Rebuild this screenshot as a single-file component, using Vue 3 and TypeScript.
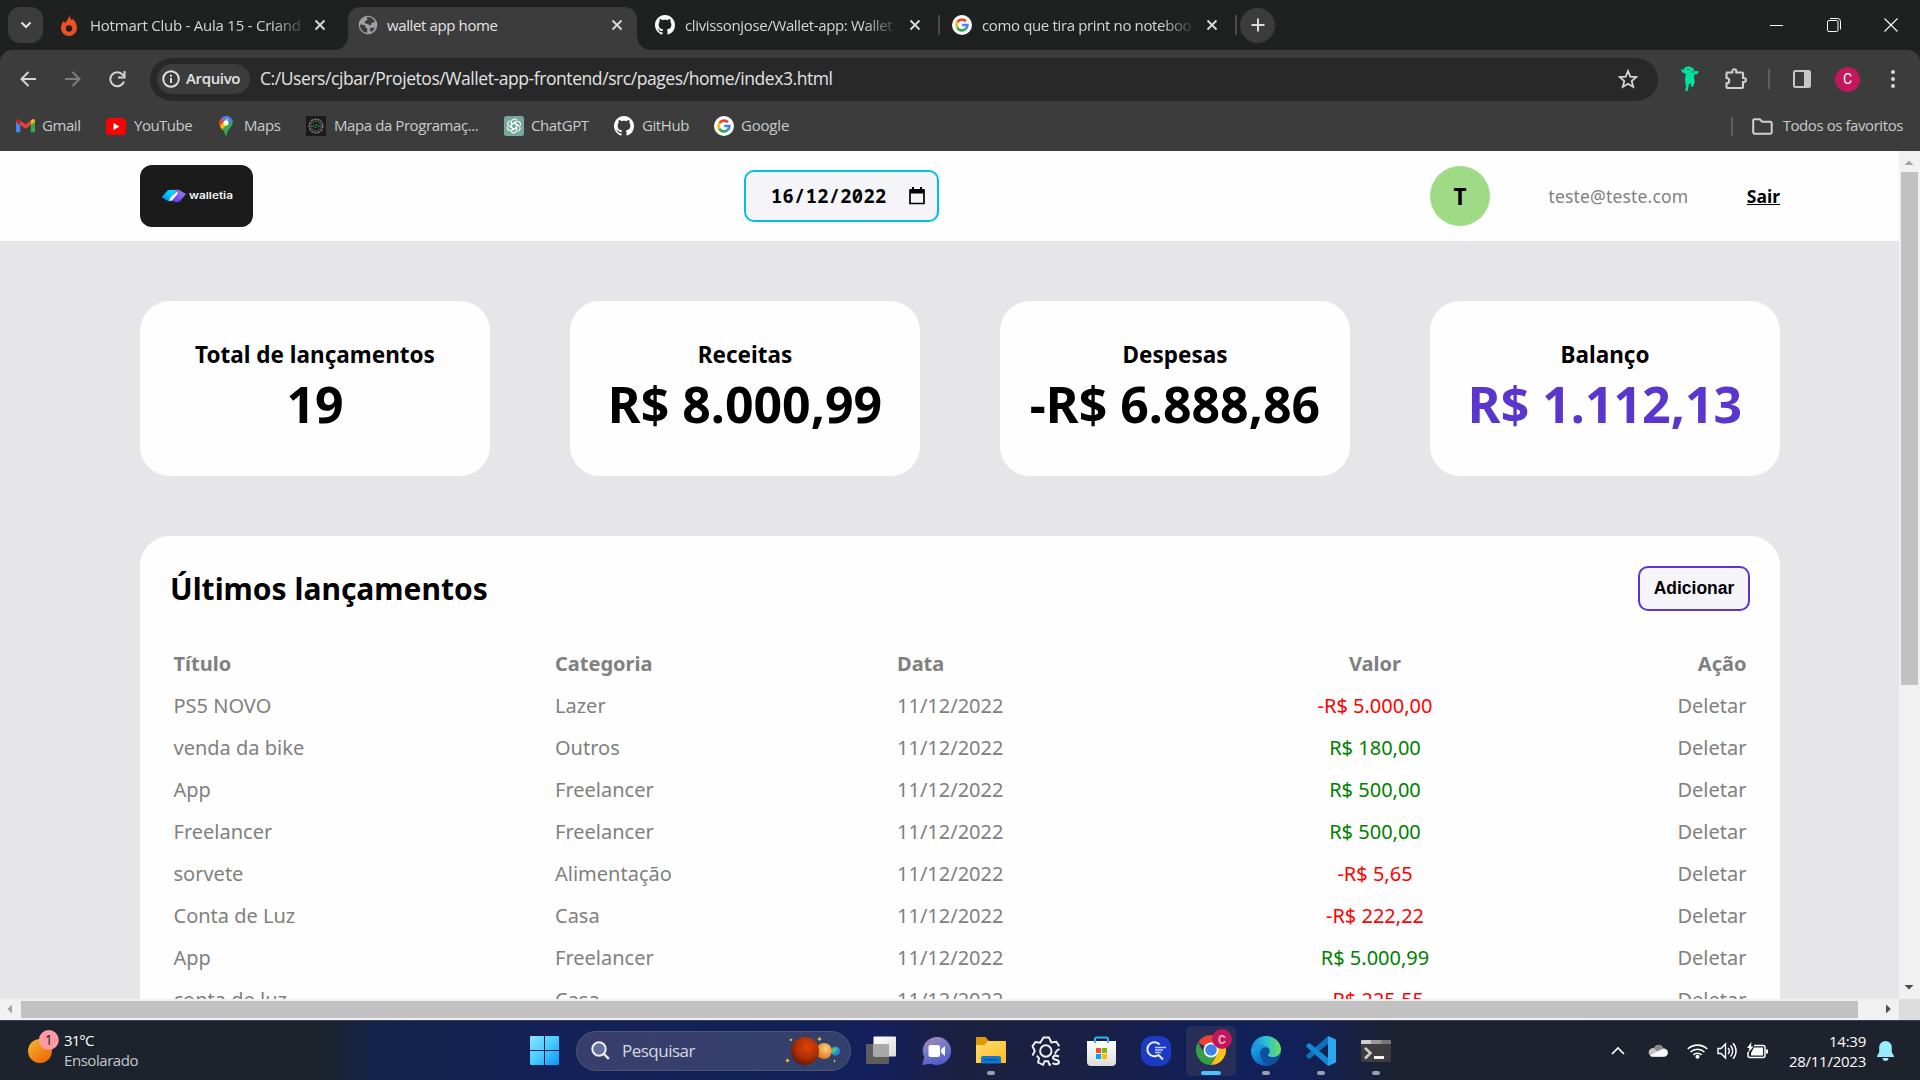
<script setup lang="ts">
interface Entry {
  title: string
  category: string
  date: string
  value: string
  income: boolean
}

const summary = [
  { label: 'Total de lançamentos', value: '19', accent: false },
  { label: 'Receitas', value: 'R$ 8.000,99', accent: false },
  { label: 'Despesas', value: '-R$ 6.888,86', accent: false },
  { label: 'Balanço', value: 'R$ 1.112,13', accent: true },
]

const entries: Entry[] = [
  { title: 'PS5 NOVO', category: 'Lazer', date: '11/12/2022', value: '-R$ 5.000,00', income: false },
  { title: 'venda da bike', category: 'Outros', date: '11/12/2022', value: 'R$ 180,00', income: true },
  { title: 'App', category: 'Freelancer', date: '11/12/2022', value: 'R$ 500,00', income: true },
  { title: 'Freelancer', category: 'Freelancer', date: '11/12/2022', value: 'R$ 500,00', income: true },
  { title: 'sorvete', category: 'Alimentação', date: '11/12/2022', value: '-R$ 5,65', income: false },
  { title: 'Conta de Luz', category: 'Casa', date: '11/12/2022', value: '-R$ 222,22', income: false },
  { title: 'App', category: 'Freelancer', date: '11/12/2022', value: 'R$ 5.000,99', income: true },
  { title: 'conta de luz', category: 'Casa', date: '11/12/2022', value: '-R$ 225,55', income: false },
]
</script>

<template>
  <div class="screen">
    <svg width="0" height="0" class="defs">
      <defs>
        <symbol id="google" viewBox="0 0 24 24">
          <circle cx="12" cy="12" r="12" fill="#fff" />
          <g fill="none" stroke-width="3.2">
            <path d="M6.6 8.4A6.5 6.5 0 0 1 16.7 7.5" stroke="#ea4335" />
            <path d="M6.3 15.1A6.5 6.5 0 0 1 6.6 8.4" stroke="#fbbc05" />
            <path d="M16.3 16.9A6.5 6.5 0 0 1 6.3 15.1" stroke="#34a853" />
            <path d="M12.2 12h6.3A6.5 6.5 0 0 1 16.2 16.9" stroke="#4285f4" />
          </g>
        </symbol>
        <symbol id="github" viewBox="0 0 16 16">
          <path fill="#fff" d="M8 0C3.58 0 0 3.58 0 8c0 3.54 2.29 6.53 5.47 7.59.4.07.55-.17.55-.38 0-.19-.01-.82-.01-1.49-2.01.37-2.53-.49-2.69-.94-.09-.23-.48-.94-.82-1.13-.28-.15-.68-.52-.01-.53.63-.01 1.08.58 1.23.82.72 1.21 1.87.87 2.33.66.07-.52.28-.87.51-1.07-1.78-.2-3.64-.89-3.64-3.95 0-.87.31-1.59.82-2.15-.08-.2-.36-1.02.08-2.12 0 0 .67-.21 2.2.82.64-.18 1.32-.27 2-.27s1.36.09 2 .27c1.53-1.04 2.2-.82 2.2-.82.44 1.1.16 1.92.08 2.12.51.56.82 1.27.82 2.15 0 3.07-1.87 3.75-3.65 3.95.29.25.54.73.54 1.48 0 1.07-.01 1.93-.01 2.2 0 .21.15.46.55.38A8.01 8.01 0 0 0 16 8c0-4.42-3.58-8-8-8z" />
        </symbol>
        <symbol id="close" viewBox="0 0 12 12">
          <path d="M1.500 1.500l9 9M10.500 1.500l-9 9" stroke="#dcdcdc" stroke-width="1.800" fill="none" />
        </symbol>
      </defs>
    </svg>

    <!-- Tab strip -->
    <div class="tabs">
      <div class="tab-search">
        <svg width="12" height="8" viewBox="0 0 12 8"><path d="M1.500 1.500L6 6l4.500-4.500" fill="none" stroke="#e3e3e3" stroke-width="2" /></svg>
      </div>
      <div class="tab first">
        <svg width="16" height="21" viewBox="0 0 16 21">
          <path fill="#f04e23" d="M8.300 0c.6 3.200 1.600 4.200 3 5.600.3-.8.4-1.500.4-2.300C14.500 6.500 16 9.800 16 13a8 8 0 0 1-16 0c0-3 1.300-5.300 3-7.300.1 1 .3 1.700.8 2.300C6 6 7.800 3.600 8.300 0z" />
          <circle cx="8" cy="13.500" r="3.200" fill="#1f2120" />
        </svg>
        <span class="tab-title fade t1">Hotmart Club - Aula 15 - Criand</span>
        <svg width="12" height="12"><use href="#close" /></svg>
      </div>
      <div class="tab active">
        <svg width="20" height="20" viewBox="0 0 20 20">
          <circle cx="10" cy="10" r="9.300" fill="#9aa0a6" />
          <path fill="#3c3c3c" d="M2 9.500c3 .2 5 .4 5.400 2.200.3 1.500 1.800 1 1.800 2.600v3.500C4.800 17.500 2 14 2 9.500zM9 2.100c3.600-.6 6.500 1.500 7.900 4.400-1 1.400-2.400.6-3.300 1.400-.8.8.6 1.700-.9 2.200-1.600.5-2.200-1-3.700-1.300-1.300-.3-2.200-.2-2.200-1.600 0-1.700 2.400-1 2.600-2.600C9.500 3.700 8.300 3 9 2.100zM12.500 13c1.500-.5 3-.2 4.300 0-.8 1.800-2.200 3.200-3.800 3.900-.9-1.100-1.400-3.300-.5-3.900z" />
        </svg>
        <span class="tab-title t2">wallet app home</span>
        <svg width="12" height="12"><use href="#close" /></svg>
      </div>
      <div class="tab third">
        <svg width="20" height="20"><use href="#github" /></svg>
        <span class="tab-title fade t3">clivissonjose/Wallet-app: Wallet</span>
        <svg width="12" height="12"><use href="#close" /></svg>
      </div>
      <i class="tab-sep"></i>
      <div class="tab fourth">
        <svg width="20" height="20"><use href="#google" /></svg>
        <span class="tab-title fade t4">como que tira print no noteboo</span>
        <svg width="12" height="12"><use href="#close" /></svg>
      </div>
      <i class="tab-sep"></i>
      <div class="new-tab">
        <svg width="14" height="14" viewBox="0 0 14 14"><path d="M7 .5v13M.5 7h13" stroke="#dcdcdc" stroke-width="2" /></svg>
      </div>
      <div class="win">
        <svg width="14" height="14" viewBox="0 0 14 14"><path d="M0 7.500h13" stroke="#fff" /></svg>
        <svg width="14" height="14" viewBox="0 0 14 14"><rect x=".5" y="2.500" width="10.500" height="11" rx="1.500" fill="none" stroke="#fff" /><path d="M3 .5h7.500a3 3 0 0 1 3 3v8" fill="none" stroke="#fff" /></svg>
        <svg width="14" height="14" viewBox="0 0 14 14"><path d="M.5.5l13 13M13.500.5l-13 13" stroke="#fff" stroke-width="1.100" /></svg>
      </div>
    </div>

    <!-- Address row -->
    <div class="toolbar">
      <svg class="nav" width="16" height="16" viewBox="0 0 16 16"><path d="M16 8H1.500M8.500 1L1.500 8l7 7" fill="none" stroke="#d5d5d5" stroke-width="2" /></svg>
      <svg class="fwd" width="16" height="16" viewBox="0 0 16 16"><path d="M0 8h14.500M7.500 1l7 7-7 7" fill="none" stroke="#7d7d7d" stroke-width="2" /></svg>
      <svg class="rel" width="17" height="17" viewBox="0 0 17 17"><path d="M15 10.500A7 7 0 1 1 13.600 3.600L15 5.200" fill="none" stroke="#d5d5d5" stroke-width="2" /><path d="M15.500 0v6.500H9" fill="none" stroke="#d5d5d5" stroke-width="2" /></svg>
      <div class="omnibox">
        <div class="chip">
          <svg width="18" height="18" viewBox="0 0 18 18"><circle cx="9" cy="9" r="7.800" fill="none" stroke="#e3e3e3" stroke-width="1.900" /><path d="M9 8v5M9 4.800v1.900" stroke="#e3e3e3" stroke-width="1.900" /></svg>
          <span>Arquivo</span>
        </div>
        <span class="url">C:/Users/cjbar/Projetos/Wallet-app-frontend/src/pages/home/index3.html</span>
        <svg class="star" width="20" height="20" viewBox="0 0 20 20"><path d="M10 2l2.300 5.600 6 .5-4.600 3.900 1.500 5.900L10 14.700l-5.200 3.200 1.500-5.900L1.700 8.100l6-.5z" fill="none" stroke="#d5d5d5" stroke-width="1.800" /></svg>
      </div>
      <svg class="ext" width="18" height="26" viewBox="0 0 18 26"><path fill="#00e0a0" d="M0 2.800L2.800 4 4 1l4-.8L12 2l1.500 3.300L17.500 5l-.5 3-3.700.5L13 12l.8 4-1.600 4.500-2 .5-.3-3.500-2 .5L7 24.500l-2.500 1 .3-6L4 14l.8-6L.8 6z" /><path d="M6 3.500h2.500M10.500 5.500l2 .8" stroke="#3c3c3c" stroke-width="1.200" /></svg>
      <svg class="puzzle" width="22" height="22" viewBox="0 0 22 22"><path d="M2 4.500h5.300V3.300a2 2 0 0 1 4 0v1.200H17a1 1 0 0 1 1 1V10h.9a2 2 0 0 1 0 4H18v5a1 1 0 0 1-1 1H2.500a1 1 0 0 1-1-1v-3.600c3.600 0 3.600-5.400 0-5.400V5.500z" fill="none" stroke="#d0d0d0" stroke-width="2.100" /></svg>
      <i class="tool-sep"></i>
      <svg class="panel" width="18" height="18" viewBox="0 0 18 18"><rect x="1" y="1" width="16" height="16" rx="1.500" fill="none" stroke="#c7c7c7" stroke-width="2" /><path d="M11 1h6v16h-6z" fill="#c7c7c7" /></svg>
      <div class="profile">C</div>
      <svg class="dots" width="4" height="18" viewBox="0 0 4 18" fill="#d5d5d5"><circle cx="2" cy="2" r="2" /><circle cx="2" cy="9" r="2" /><circle cx="2" cy="16" r="2" /></svg>
    </div>

    <!-- Bookmarks -->
    <div class="bookmarks">
      <div class="bm b1">
        <svg width="19" height="14" viewBox="0 0 19 14"><path d="M0 2v11.200h4.300V4z" fill="#4285f4" /><path d="M19 2v11.200h-4.300V4z" fill="#34a853" /><path d="M14.700 5.800V1.600l1.800-1.200C17.700-.4 19 .6 19 2v1z" fill="#fbbc04" /><path d="M4.300 6V1.500l5.200 3.900 5.200-3.900V6L9.500 9.800z" fill="#ea4335" /><path d="M0 3V2C0 .6 1.300-.4 2.500.4l1.800 1.200V6z" fill="#c5221f" /></svg>
        <span>Gmail</span>
      </div>
      <div class="bm b2">
        <svg width="20" height="17" viewBox="0 0 20 17"><rect width="20" height="17" rx="4" fill="#f00" /><path d="M7.500 5v7l6-3.500z" fill="#fff" /></svg>
        <span>YouTube</span>
      </div>
      <div class="bm b3">
        <svg width="14" height="20" viewBox="0 0 14 20"><path d="M7 0a7 7 0 0 1 6.600 4.800L7 11 2 2.200A7 7 0 0 1 7 0z" fill="#4285f4" /><path d="M2 2.200L5.200 5 .8 10A7 7 0 0 1 2 2.200z" fill="#ea4335" /><path d="M.8 10l8-8.600L9 8.500l-6 5.300z" fill="#fbbc04" /><path d="M13.600 4.800C14.800 10 9 12 7.800 18.500 7.500 20.300 6.400 20.300 6.100 18.500 5.700 16 4.500 14.700 3 13.200z" fill="#34a853" /><path d="M3.300 2.500A7 7 0 0 1 9 .3L4.500 5.500z" fill="#4285f4" /><circle cx="7" cy="7" r="2.500" fill="#fff" /></svg>
        <span>Maps</span>
      </div>
      <div class="bm b4">
        <svg width="20" height="20" viewBox="0 0 20 20"><rect width="20" height="20" fill="#1c1a1a" /><circle cx="10" cy="10" r="6.800" fill="none" stroke="#8d8d8d" stroke-width="1.200" stroke-dasharray="2.500 .8" /><circle cx="10" cy="10" r="5" fill="none" stroke="#6d6d6d" stroke-width=".8" /><path d="M8 8.500L6.500 10 8 11.500M12 8.500l1.500 1.500-1.500 1.500M10.500 8l-1 4" fill="none" stroke="#1f9d55" /></svg>
        <span>Mapa da Programaç...</span>
      </div>
      <div class="bm b5">
        <svg width="20" height="20" viewBox="0 0 20 20"><rect width="20" height="20" rx="2.500" fill="#75a99c" /><g fill="none" stroke="#fff" stroke-width="1.100"><path v-for="a in [0, 60, 120, 180, 240, 300]" :key="a" :transform="`rotate(${a} 10 10)`" d="M7.400 11.500V5.800a3 3 0 0 1 5.400-1.500M7.400 8.500l4.700-2.700" /></g></svg>
        <span>ChatGPT</span>
      </div>
      <div class="bm b6">
        <svg width="20" height="20"><use href="#github" /></svg>
        <span>GitHub</span>
      </div>
      <div class="bm b7">
        <svg width="20" height="20"><use href="#google" /></svg>
        <span>Google</span>
      </div>
      <div class="bm all">
        <i></i>
        <svg width="21" height="17" viewBox="0 0 21 17"><path d="M2.500 1.200h5.300l2.400 2.600h8a1.500 1.500 0 0 1 1.500 1.500v9a1.500 1.500 0 0 1-1.500 1.500H2.700a1.500 1.500 0 0 1-1.500-1.500V2.500a1.300 1.300 0 0 1 1.300-1.300z" fill="none" stroke="#d0d0d0" stroke-width="2" /></svg>
        <span>Todos os favoritos</span>
      </div>
    </div>

    <!-- Web page -->
    <div class="viewport">
      <div class="page">
        <header class="site-header">
          <div class="logo">
            <svg width="113" height="62" viewBox="0 0 113 62">
              <defs>
                <linearGradient id="lc" x1="0" y1="1" x2="1" y2="0"><stop offset="0" stop-color="#0077ff" /><stop offset=".5" stop-color="#00c2ff" /><stop offset="1" stop-color="#14e0f5" /></linearGradient>
                <linearGradient id="lp" x1="0" y1="1" x2="1" y2="0"><stop offset="0" stop-color="#5327e8" /><stop offset="1" stop-color="#a888f5" /></linearGradient>
              </defs>
              <path d="M28 25l-6.300 7.200 7.300 4.200 2.600-.8L37.500 26.500l-2.200-1.700-4.300.1z" fill="url(#lc)" />
              <path d="M36.500 24.800l1.800-.3 7.700 4.500-5.800 7-3.700 1.500-6.500-2.500z" fill="url(#lp)" />
              <path d="M37 26.500l-7 6.500-.5 2.800 2.500-.4 5.700-6.600z" fill="#fff" />
              <text x="49" y="34" textLength="44" lengthAdjust="spacingAndGlyphs">walletia</text>
            </svg>
          </div>
          <div class="date-input">
            <span>16/12/2022</span>
            <svg width="16" height="18" viewBox="0 0 16 18"><path d="M1 3h14v13.500H1z" fill="none" stroke="#000" stroke-width="1.700" /><path d="M1 2h14v4.500H1zM3 0h2v3H3zM11 0h2v3h-2z" /></svg>
          </div>
          <div class="user">
            <div class="avatar">T</div>
            <span class="email">teste@teste.com</span>
            <a>Sair</a>
          </div>
        </header>

        <main>
          <section class="summary">
            <article v-for="c in summary" :key="c.label" class="card">
              <h3>{{ c.label }}</h3>
              <strong :class="{ accent: c.accent }">{{ c.value }}</strong>
            </article>
          </section>

          <section class="list">
            <div class="list-head">
              <h2>Últimos lançamentos</h2>
              <button>Adicionar</button>
            </div>
            <div class="row head">
              <span>Título</span><span>Categoria</span><span>Data</span><span class="val">Valor</span><span class="act">Ação</span>
            </div>
            <div v-for="(e, i) in entries" :key="i" class="row">
              <span>{{ e.title }}</span>
              <span>{{ e.category }}</span>
              <span>{{ e.date }}</span>
              <span class="val" :class="e.income ? 'in' : 'out'">{{ e.value }}</span>
              <span class="act">Deletar</span>
            </div>
          </section>
        </main>
      </div>
      <div class="vbar">
        <svg width="21" height="21" viewBox="0 0 21 21"><path d="M5.500 14h9L10 9.500z" fill="#a3a3a3" /></svg>
        <div class="vthumb"></div>
        <svg width="21" height="21" viewBox="0 0 21 21"><path d="M5.500 7h9L10 11.500z" fill="#4f4f4f" /></svg>
      </div>
    </div>
    <div class="hbar">
      <svg width="21" height="21" viewBox="0 0 21 21"><path d="M12 5.500v9L7.500 10z" fill="#a3a3a3" /></svg>
      <div class="hthumb"></div>
      <svg width="21" height="21" viewBox="0 0 21 21"><path d="M8 5.500v9l4.800-4.500z" fill="#4f4f4f" /></svg>
      <div class="corner"></div>
    </div>

    <!-- Taskbar -->
    <div class="taskbar">
      <div class="weather">
        <svg width="36" height="36" viewBox="0 0 36 36">
          <defs><linearGradient id="sun" x1="0" y1="0" x2=".8" y2="1"><stop offset="0" stop-color="#f3bd2e" /><stop offset="1" stop-color="#f0610a" /></linearGradient></defs>
          <circle cx="12" cy="22" r="12" fill="url(#sun)" />
          <circle cx="20.800" cy="11" r="10" fill="#ff99a4" />
          <text x="20.800" y="16" text-anchor="middle">1</text>
        </svg>
        <div class="wtext"><span class="temp">31°C</span><span>Ensolarado</span></div>
      </div>

      <div class="apps">
        <svg width="29" height="29" viewBox="0 0 29 29">
          <defs><linearGradient id="win" gradientUnits="userSpaceOnUse" x1="0" y1="0" x2="29" y2="29"><stop offset="0" stop-color="#8fe3ff" /><stop offset=".5" stop-color="#48cbfc" /><stop offset="1" stop-color="#0a94f5" /></linearGradient></defs>
          <path fill="url(#win)" d="M1 0h13v14H0V1a1 1 0 0 1 1-1zM15 0h13a1 1 0 0 1 1 1v13H15zM0 15h14v14H1a1 1 0 0 1-1-1zM15 15h14v13a1 1 0 0 1-1 1H15z" />
        </svg>
        <div class="search">
          <svg width="19" height="19" viewBox="0 0 19 19"><circle cx="8" cy="8" r="6.700" fill="#65709a" stroke="#eceef5" stroke-width="2" /><path d="M12.800 12.800l5 5" stroke="#eceef5" stroke-width="2.400" /></svg>
          <span>Pesquisar</span>
          <svg class="planets" width="56" height="30" viewBox="0 0 56 30">
            <defs>
              <radialGradient id="mars" cx=".58" cy=".35" r=".75"><stop offset="0" stop-color="#d94508" /><stop offset=".5" stop-color="#b53005" /><stop offset="1" stop-color="#521204" /></radialGradient>
              <radialGradient id="venus" cx=".6" cy=".35" r=".7"><stop offset="0" stop-color="#ffcf7a" /><stop offset="1" stop-color="#d9701c" /></radialGradient>
            </defs>
            <circle cx="50.500" cy="15" r="4.500" fill="#2a8ae0" /><path d="M48 12c3-2 5 0 4 2s-3 1-3 4c-2-1-3-4-1-6z" fill="#42c97c" />
            <circle cx="39" cy="15" r="8" fill="url(#venus)" /><circle cx="20" cy="15" r="14" fill="url(#mars)" />
            <path fill="#f5c235" d="M2.500 22l.8 1.700 1.700.8-1.700.8-.8 1.700-.8-1.700L0 24.500l1.700-.8zM34.500.5l.8 1.700 1.700.8-1.700.8-.8 1.700-.8-1.700L32 3l1.700-.8zM6 2.500l1.500 1.300L6 5.200 4.500 3.800zM49.500 23.500l1 1.500-1 1.500-1-1.500z" />
          </svg>
        </div>
        <div class="slot">
          <svg width="30" height="29" viewBox="0 0 30 29"><defs><linearGradient id="tv" x1="0" y1="0" x2="1" y2="1"><stop offset="0" stop-color="#fff" /><stop offset="1" stop-color="#dcdcdc" /></linearGradient></defs><rect y="8" width="23" height="20" rx="1" fill="#5d5d5d" /><rect x="7.500" y=".5" width="22.500" height="20" rx="1" fill="url(#tv)" /><path d="M7.500 8H23v12.500H7.500z" fill="#a9a9a9" /></svg>
        </div>
        <div class="slot">
          <svg width="29" height="28" viewBox="0 0 29 28"><defs><linearGradient id="ch" x1=".2" y1="0" x2=".6" y2="1"><stop offset="0" stop-color="#a884b8" /><stop offset=".5" stop-color="#7078c8" /><stop offset="1" stop-color="#5258cc" /></linearGradient></defs><path d="M15 0a14 14 0 1 1-5.800 26.700L0 28l2.300-7.500A14 14 0 0 1 15 0z" fill="url(#ch)" /><rect x="6.500" y="8" width="11.500" height="12" rx="2" fill="#fff" /><path d="M19 12.500l4-3.500v10l-4-3.500z" fill="#fff" /></svg>
        </div>
        <div class="slot run">
          <svg width="30" height="27" viewBox="0 0 30 27"><defs><linearGradient id="fo" x1="0" y1="0" x2="1" y2="1"><stop offset="0" stop-color="#ffdc6b" /><stop offset="1" stop-color="#fcbd26" /></linearGradient></defs><path d="M1 0h8.500l3 3.500v5H0V1a1 1 0 0 1 1-1z" fill="#dc9a08" /><path d="M12 4h17a1 1 0 0 1 1 1v21H0V8h8.500z" fill="url(#fo)" /><path d="M5 26.500V21a2 2 0 0 1 2-2h16a2 2 0 0 1 2 2v5.500z" fill="#0f77cf" /><path d="M8.500 22.700h13" stroke="#0a4a8c" stroke-width="1.300" /></svg>
        </div>
        <div class="slot">
          <svg width="30" height="30" viewBox="0 0 30 30"><g fill="none" stroke="#f2f2f2" stroke-width="1.900"><path d="M20 28.500l-1.500.3-1.300-3.600h-3.600l-1.500 3.600-5-2.300.9-4.200-2.200-2.600M1.500 19.500l2.300-4.500-2.300-4.800L4.500 6l4.700.8L12.500 1.500h5.500l2.300 5 5-.8 3 4.500" /><circle cx="14.800" cy="15" r="5.700" /><path d="M28.500 13c-3 1.500-4.500 2.500-4.300 5.500" /></g><path d="M28 20.500c-2.500-1.300-6-1-6 1.200 0 2.500 6 1.500 6 4.300 0 2.500-4 2.700-6.500 1.200" fill="none" stroke="#f2f2f2" stroke-width="2" /></svg>
        </div>
        <div class="slot">
          <svg width="29" height="30" viewBox="0 0 29 30"><defs><linearGradient id="st" x1="0" y1="0" x2="0" y2="1"><stop offset="0" stop-color="#fff" /><stop offset="1" stop-color="#dcdcdc" /></linearGradient></defs><path d="M0 5h29v21a4 4 0 0 1-4 4H4a4 4 0 0 1-4-4z" fill="url(#st)" /><path d="M8 7V3a1.500 1.500 0 0 1 1.500-1.500h10A1.500 1.500 0 0 1 21 3v4" fill="none" stroke="#2fb4f0" stroke-width="2" /><path d="M9 12h5v5H9z" fill="#f25022" /><path d="M15 12h5v5h-5z" fill="#7fba00" /><path d="M9 18h5v5H9z" fill="#00a4ef" /><path d="M15 18h5v5h-5z" fill="#ffb900" /></svg>
        </div>
        <div class="slot">
          <svg width="30" height="30" viewBox="0 0 30 30"><rect width="30" height="30" rx="11" fill="#1b3bc4" /><path d="M18.500 8.500a7 7 0 1 0-1 10.500l4.500 4.500" fill="none" stroke="#eef" stroke-width="2" /><path d="M14 11.500h11M14 14h8M14 16.500h6" stroke="#b9c8ff" stroke-width="1.300" /></svg>
        </div>
        <div class="slot on">
          <svg width="36" height="36" viewBox="0 0 36 36"><path d="M15 21L2 13.500A15 15 0 0 1 28 13.500H15z" fill="#ea4335" /><path d="M15 21l-6.500 3.700L2 13.500A15 15 0 0 0 15 36l6.500-11.300z" fill="#34a044" /><path d="M15 21V13.500h13A15 15 0 0 1 15 36l6.500-11.300z" fill="#fbc116" /><circle cx="15" cy="21" r="7.500" fill="#fff" /><circle cx="15" cy="21" r="5.800" fill="#3b82f0" /><circle cx="26" cy="10" r="10" fill="#c2185b" /><text x="26" y="14.500" text-anchor="middle">C</text></svg>
        </div>
        <div class="slot run">
          <svg width="30" height="30" viewBox="0 0 30 30"><defs><linearGradient id="e1" x1="0" y1=".4" x2="1" y2=".4"><stop offset="0" stop-color="#1a86d8" /><stop offset=".5" stop-color="#2cc0d8" /><stop offset="1" stop-color="#6be05a" /></linearGradient><linearGradient id="e2" x1="0" y1="0" x2=".7" y2="1"><stop offset="0" stop-color="#1db0ee" /><stop offset="1" stop-color="#0b5cc0" /></linearGradient></defs><circle cx="15" cy="15" r="15" fill="#0f4f9e" /><path d="M0 14C1 5 8 0 15 0c9 0 15 6.500 15 13.500 0 5-4 7.500-8 7.500s-5.500-1.500-5-2.500c1.500-1.500 2-3 1.500-5C17 9.500 5 7 0 14z" fill="url(#e1)" /><path d="M0 14c3-6 12-6 16-2.500C9 11 8 17 10 21.500c1.500 4 5 7 8.500 8C8 31.500 0 24 0 14z" fill="url(#e2)" /><path d="M12.500 15c0 7 7 9.500 15.500 7.500-2 3.500-6 6.500-9.500 7-5-1.500-10-8.500-6-14.500z" fill="#11509f" /></svg>
        </div>
        <div class="slot run">
          <svg width="30" height="30" viewBox="0 0 30 30"><path d="M22 0l7 3a1.500 1.500 0 0 1 1 1.500v21a1.500 1.500 0 0 1-1 1.500l-7 3z" fill="#2ba7ef" /><path d="M22 0v8L4 22.500l-1.500.2L.3 20.700v-1.500z" fill="#0f70bd" /><path d="M22 30v-8L4 7.500l-1.500-.2L.3 9.300v1.500z" fill="#1586d6" /></svg>
        </div>
        <div class="slot run">
          <svg width="30" height="22" viewBox="0 0 30 22"><rect width="30" height="22" rx="1.500" fill="#3d3d3d" /><path d="M1 0h9v4H0V1a1 1 0 0 1 1-1z" fill="#ccc" /><path d="M10 0h10v4H10z" fill="#999" /><path d="M20 0h9a1 1 0 0 1 1 1v3H20z" fill="#777" /><path d="M4 8l5.500 5L4 18.500" fill="none" stroke="#ccc" stroke-width="2.600" /><path d="M13 17.500h10" stroke="#fff" stroke-width="2.800" /></svg>
        </div>
      </div>

      <div class="tray">
        <svg width="14" height="9" viewBox="0 0 14 9"><path d="M1 8l6-6 6 6" fill="none" stroke="#fff" stroke-width="1.700" /></svg>
        <svg class="cloud" width="20" height="13" viewBox="0 0 20 13"><path d="M6 4a5 5 0 0 1 9.500.5L10 9 4 5z" fill="#8a8a8a" /><path d="M4 12.500A4.200 4.200 0 1 1 6 4.200L15 12.500z" fill="#c4c4c4" /><path d="M2 11.500L12 6l3.500-1.500A4 4 0 0 1 16 12.800H4.500A4 4 0 0 1 2 11.500z" fill="#f6f6f6" /></svg>
        <svg class="wifi" width="21" height="16" viewBox="0 0 21 16"><g fill="none" stroke="#fff" stroke-width="1.600"><path d="M.8 6a14 14 0 0 1 19.400 0" /><path d="M3.600 9a10 10 0 0 1 13.800 0" /><path d="M6.400 11.800a6 6 0 0 1 8.200 0" /></g><circle cx="10.500" cy="13.800" r="2" fill="#fff" /></svg>
        <svg class="spk" width="20" height="18" viewBox="0 0 20 18"><g fill="none" stroke="#fff" stroke-width="1.400"><path d="M1 6.500h3L8.500 2v14L4 11.500H1z" /><path d="M11 6a4 4 0 0 1 0 6M13.500 3.500a8 8 0 0 1 0 11M16 1.200a11.500 11.500 0 0 1 0 15.600" /></g></svg>
        <svg class="bat" width="21" height="17" viewBox="0 0 21 17"><path d="M7 3.500h9a2 2 0 0 1 2 2v8a2 2 0 0 1-2 2H3a2 2 0 0 1-2-2V10" fill="none" stroke="#fff" stroke-width="1.500" /><path d="M7 5.500h9v8H4V11z" fill="#fff" /><path d="M19 7.500h2v4h-2zM4.500 0L0 6h2.500L1 11l5.500-6.500H4z" fill="#fff" /></svg>
        <div class="clock"><span>14:39</span><span>28/11/2023</span></div>
        <svg class="bell" width="17" height="20" viewBox="0 0 17 20"><path d="M8.500 0a6.300 6.300 0 0 1 6.300 6.300v5L17 15v1H0v-1l2.200-3.700v-5A6.300 6.300 0 0 1 8.500 0zM5.500 17h6a3 3 0 0 1-6 0z" fill="#99ebff" /></svg>
      </div>
    </div>
  </div>
</template>

<style>
html,
body {
  margin: 0;
  overflow: hidden;
}
</style>

<style scoped>
* {
  box-sizing: border-box;
}
.defs {
  position: absolute;
}
.screen {
  width: 1920px;
  height: 1080px;
  display: flex;
  flex-direction: column;
  overflow: hidden;
  font-family: 'Open Sans', 'Noto Sans', sans-serif;
  background: #1f2120;
}
svg {
  display: block;
  flex: none;
}

.tabs {
  height: 50px;
  flex: none;
  display: flex;
  align-items: center;
  background: #1f2120;
  color: #d5d5d5;
  font-size: 15px;
}
.tab-search {
  width: 35px;
  height: 36px;
  margin-left: 8px;
  border-radius: 12px;
  background: #3c3c3c;
  display: grid;
  place-items: center;
}
.tab {
  display: flex;
  align-items: center;
  height: 36px;
}
.tab-title {
  flex: none;
  white-space: nowrap;
  line-height: 24px;
  letter-spacing: -0.38px;
}
.fade {
  -webkit-mask-image: linear-gradient(90deg, #000 86%, rgba(0, 0, 0, 0.15) 100%);
  mask-image: linear-gradient(90deg, #000 86%, rgba(0, 0, 0, 0.15) 100%);
}
.first {
  width: 305px;
  padding-left: 18px;
}
.t1 {
  width: 212px;
  margin-left: 13px;
  margin-right: 12px;
  letter-spacing: -0.23px;
}
.active {
  position: relative;
  align-self: flex-end;
  width: 289px;
  height: 43px;
  padding: 0 0 7px 10px;
  background: #3c3c3c;
  border-radius: 12px 12px 0 0;
  color: #e3e3e3;
}
.active::before,
.active::after {
  content: '';
  position: absolute;
  bottom: 0;
  width: 13px;
  height: 13px;
}
.active::before {
  left: -13px;
  background: radial-gradient(circle at 0 0, transparent 12.5px, #3c3c3c 13px);
}
.active::after {
  right: -13px;
  background: radial-gradient(circle at 100% 0, transparent 12.5px, #3c3c3c 13px);
}
.t2 {
  width: 210px;
  margin-left: 9px;
  margin-right: 14px;
}
.third {
  width: 301px;
  padding-left: 18px;
}
.t3,
.t4 {
  width: 209px;
  margin-left: 10px;
  margin-right: 15px;
  letter-spacing: -0.36px;
}
.fourth {
  width: 295px;
  padding-left: 12px;
}
.tab-sep {
  width: 2px;
  height: 20px;
  background: #4a4b4a;
}
.tab-sep + .new-tab {
  margin-left: 3px;
}
.new-tab {
  width: 35px;
  height: 35px;
  border-radius: 50%;
  background: #3c3c3c;
  display: grid;
  place-items: center;
}
.win {
  margin-left: auto;
  padding-right: 22px;
  display: flex;
  gap: 43px;
}

.toolbar {
  height: 58px;
  flex: none;
  display: flex;
  align-items: center;
  background: #3c3c3c;
  border-radius: 12px 12px 0 0;
}
.nav {
  margin-left: 20px;
}
.fwd {
  margin-left: 29px;
}
.rel {
  margin-left: 28px;
}
.omnibox {
  margin-left: 24px;
  width: 1508px;
  height: 43px;
  border-radius: 22px;
  background: #282828;
  display: flex;
  align-items: center;
  padding-left: 7px;
}
.chip {
  width: 93px;
  height: 30px;
  border-radius: 15px;
  background: #3c3c3c;
  display: flex;
  align-items: center;
  padding-left: 5px;
  gap: 6px;
  font-size: 15px;
  font-weight: 600;
  letter-spacing: -0.35px;
  color: #e3e3e3;
}
.chip span {
  padding-bottom: 2px;
}
.url {
  margin-left: 10px;
  padding-bottom: 2px;
  font-size: 17.5px;
  letter-spacing: -0.43px;
  color: #e3e3e3;
  white-space: nowrap;
}
.star {
  margin-left: auto;
  margin-right: 20px;
}
.ext {
  margin-left: 23px;
}
.puzzle {
  margin-left: 26px;
}
.tool-sep {
  width: 2px;
  height: 20px;
  margin-left: 21px;
  background: #5e5e5e;
}
.panel {
  margin-left: 23px;
}
.profile {
  margin-left: 24px;
  width: 25px;
  height: 25px;
  border-radius: 50%;
  background: #c2185b;
  color: #fff;
  font: 14px/25px 'Roboto', sans-serif;
  text-align: center;
}
.dots {
  margin-left: 31px;
}

.bookmarks {
  height: 43px;
  flex: none;
  display: flex;
  align-items: center;
  padding-bottom: 7px;
  background: #3c3c3c;
  color: #c9cbcd;
  font-size: 15px;
  letter-spacing: -0.42px;
}
.bm {
  display: flex;
  align-items: center;
  gap: 8px;
  white-space: nowrap;
}
.bm span {
  flex: none;
  padding-bottom: 2px;
}
.b1 {
  margin-left: 16px;
  width: 90px;
  gap: 7px;
}
.b2 {
  width: 113px;
  letter-spacing: -0.5px;
}
.b3 {
  width: 87px;
  gap: 11px;
}
.b4 {
  width: 198px;
}
.b5 {
  width: 110px;
  gap: 7px;
}
.b6 {
  width: 100px;
}
.b7 {
  width: 80px;
  gap: 7px;
  letter-spacing: -0.2px;
}
.all {
  margin-left: auto;
  padding-right: 17px;
  gap: 10px;
}
.all i {
  width: 2px;
  height: 19px;
  margin-right: 9px;
  background: #5e5e5e;
}

.viewport {
  height: 848px;
  flex: none;
  display: flex;
  overflow: hidden;
}
.page {
  width: 1899px;
  height: 848px;
  overflow: hidden;
  background: #e6e6e8;
  font-family: 'Noto Sans', sans-serif;
  color: #000;
}
.site-header {
  height: 90px;
  background: #fefefe;
  padding: 0 119px 0 140px;
  display: flex;
  align-items: center;
  justify-content: space-between;
}
.logo {
  width: 113px;
  height: 62px;
  border-radius: 12px;
  background: #1b1b1b;
}
.logo text {
  font: 600 9.5px 'Inter', 'Lato', sans-serif;
  fill: #f2f2f2;
}
.date-input {
  width: 195px;
  height: 52px;
  border: 2px solid #00c0e4;
  border-radius: 10px;
  background: #f4f4f9;
  display: flex;
  align-items: center;
  justify-content: space-between;
  padding: 0 12px 0 25px;
  font: 700 18.75px 'Noto Sans Mono', 'DejaVu Sans Mono', monospace;
  letter-spacing: 0.3px;
}
.date-input span {
  padding-bottom: 2px;
}
.user {
  width: 350px;
  display: flex;
  align-items: center;
  justify-content: space-between;
  font-size: 17.5px;
}
.avatar {
  width: 60px;
  height: 60px;
  border-radius: 50%;
  background: #9fdb87;
  font: 700 22.5px/62px 'Noto Sans', sans-serif;
  text-align: center;
}
.email {
  color: #808080;
  letter-spacing: 0.17px;
}
.user a {
  font-weight: 700;
  text-decoration: underline;
}
main {
  padding: 60px 119px 0 140px;
}
.summary {
  display: flex;
  gap: 80px;
}
.card {
  width: 350px;
  height: 175px;
  padding-top: 37.5px;
  border-radius: 30px;
  background: #fefefe;
  text-align: center;
  white-space: nowrap;
}
.card h3 {
  margin: 0;
  font-size: 22.5px;
  font-weight: 700;
}
.card strong {
  display: block;
  font-size: 50px;
  font-weight: 700;
}
.accent {
  color: #5a36cd;
}
.list {
  margin-top: 60px;
  height: 600px;
  border-radius: 30px;
  background: #fefefe;
  padding: 30px 30px 0;
}
.list-head {
  height: 76px;
  display: flex;
  align-items: flex-start;
  justify-content: space-between;
}
.list-head h2 {
  margin: 2px 0 0;
  font-size: 30px;
  font-weight: 700;
}
.list-head button {
  width: 112px;
  height: 45px;
  padding: 0;
  border: 2px solid #5a36cd;
  border-radius: 10px;
  background: #f4f4f9;
  color: #000;
  font: 700 17.5px 'Liberation Sans', sans-serif;
}
.row {
  height: 42px;
  padding: 0 3.5px;
  display: grid;
  grid-template-columns: 381.5px 342px 337px 282px 1fr;
  align-items: center;
  font-size: 20px;
  color: #808080;
}
.head {
  font-weight: 700;
}
.val {
  text-align: center;
}
.act {
  text-align: right;
}
.in {
  color: #008000;
}
.out {
  color: #f00;
}
.vbar {
  width: 21px;
  background: #f1f1f1;
  display: flex;
  flex-direction: column;
}
.vthumb {
  width: 17px;
  height: 513px;
  margin: 0 2px auto;
  background: #c1c1c1;
}
.hbar {
  height: 21px;
  flex: none;
  display: flex;
  align-items: center;
  background: #f1f1f1;
}
.hthumb {
  width: 1837px;
  height: 17px;
  margin-right: auto;
  background: #c1c1c1;
}
.corner {
  width: 21px;
  height: 21px;
  background: #dcdcdc;
}

.taskbar {
  height: 60px;
  flex: none;
  display: flex;
  align-items: center;
  border-top: 1px solid #3c4250;
  background: linear-gradient(90deg, #1d232d 0, #1d232d 320px, #13234b 380px, #152159 560px, #112256 740px, #141f5c 880px, #1c2040 960px, #1a2044 1080px, #122058 1200px, #12215a 1300px, #1d212e 1400px, #1d222c 100%);
  color: #fff;
  font-size: 15px;
}
.weather {
  width: 502px;
  padding-left: 28px;
  display: flex;
  align-items: center;
}
.weather svg {
  margin-bottom: 7px;
}
.weather svg text {
  font: 14px 'Open Sans', sans-serif;
  fill: #222;
}
.wtext {
  margin-left: 0;
  padding-bottom: 2px;
  display: flex;
  flex-direction: column;
  line-height: 20px;
}
.wtext span {
  color: #c6c8cc;
  letter-spacing: -0.45px;
}
.wtext .temp {
  color: #fff;
  letter-spacing: -0.9px;
}
.apps {
  margin-left: 28px;
  display: flex;
  align-items: center;
}
.search {
  width: 275px;
  height: 40px;
  margin: 0 5px 0 17px;
  padding: 0 9px 0 14px;
  border: 1px solid #4d5679;
  border-radius: 20px;
  background: linear-gradient(90deg, #383e6b, #33406b);
  display: flex;
  align-items: center;
  font-size: 17px;
  letter-spacing: -0.5px;
  color: #d5d8e4;
}
.search span {
  margin-left: 12px;
}
.planets {
  margin-left: auto;
}
.slot {
  position: relative;
  width: 50px;
  height: 50px;
  margin-right: 5px;
  display: grid;
  place-items: center;
}
.run::after,
.on::after {
  content: '';
  position: absolute;
  bottom: 1px;
  left: 21px;
  width: 8px;
  height: 4px;
  border-radius: 2px;
  background: #9a9fae;
}
.on {
  border-radius: 5px;
  background: #272e58;
  padding: 0 0 7px 6px;
}
.on::after {
  left: 15px;
  width: 20px;
  background: #4cc2ff;
}
.on text {
  font: 700 12px 'Roboto', sans-serif;
  fill: #f0b0cc;
}
.tray {
  margin-left: auto;
  padding-right: 26px;
  display: flex;
  align-items: center;
}
.cloud {
  margin-left: 23px;
}
.wifi {
  margin-left: 19px;
}
.spk {
  margin-left: 9px;
}
.bat {
  margin-left: 10px;
}
.clock {
  width: 98px;
  display: flex;
  flex-direction: column;
  text-align: right;
  line-height: 20px;
  letter-spacing: -0.25px;
}
.bell {
  margin-left: 11px;
}
</style>
